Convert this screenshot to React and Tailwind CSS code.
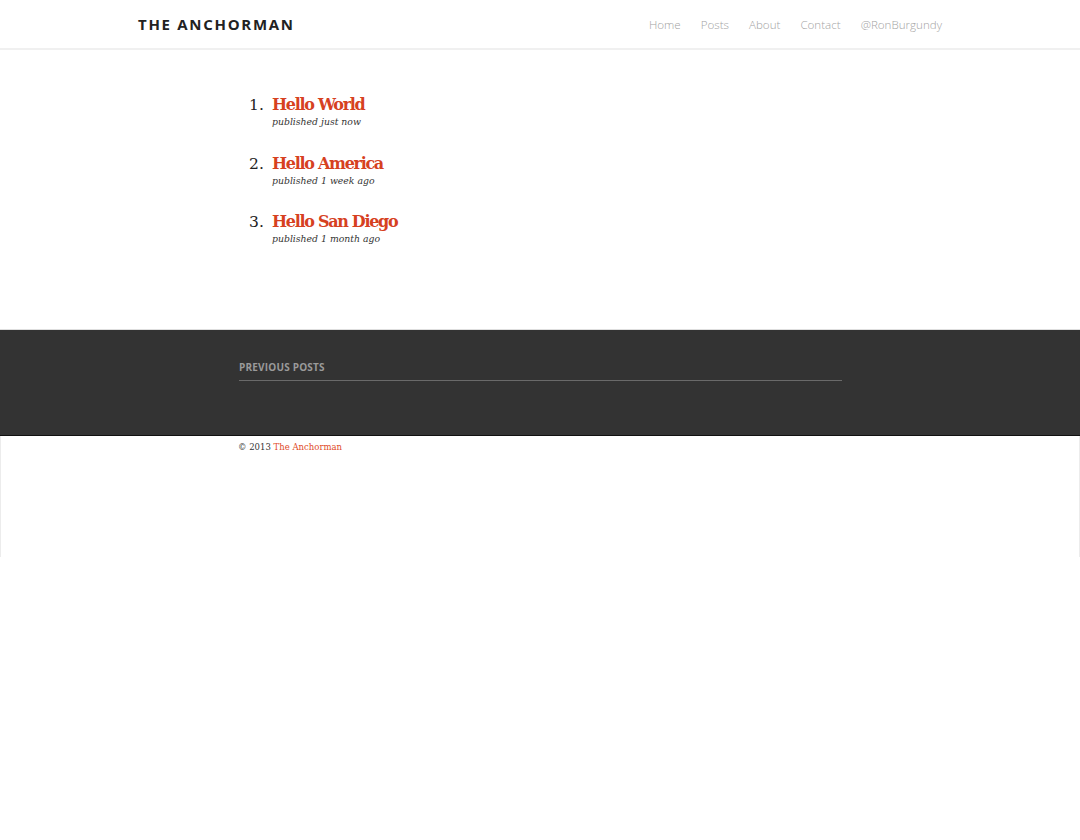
const posts = [
  { title: 'Hello World', when: 'just now' },
  { title: 'Hello America', when: '1 week ago' },
  { title: 'Hello San Diego', when: '1 month ago' },
];

export default function App() {
  return (
    <div className="min-h-[840px] bg-white">
      {/* Top bar */}
      <header className="h-[50px] border-b-2 border-[#f0f0f0] bg-white">
        <div className="mx-auto flex h-full w-[804px] items-center justify-between pt-[1px]">
          <a className="font-['Open_Sans',sans-serif] text-[15px] font-bold tracking-[1.7px] text-[#222]">
            THE ANCHORMAN
          </a>
          <nav className="flex gap-[20px] font-['Open_Sans',sans-serif] text-[11.6px] font-light text-[#a3a3a3]">
            <a>Home</a>
            <a>Posts</a>
            <a>About</a>
            <a>Contact</a>
            <a>@RonBurgundy</a>
          </nav>
        </div>
      </header>

      {/* Post list */}
      <main className="h-[279px] pt-[45px]">
        <ol className="mx-auto flex w-[602px] flex-col gap-[24.5px] font-['DejaVu_Serif',serif]">
          {posts.map((post, i) => (
            <li key={post.title} className="flex">
              <span className="w-[33px] pl-[10px] text-[15.5px] leading-[20px] text-[#222]">{i + 1}.</span>
              <div>
                <h2 className="text-[16px] font-bold leading-[20px] tracking-[-1.3px] text-[#d6411f]">{post.title}</h2>
                <p className="text-[9.3px] italic leading-[14px] text-[#333]">published {post.when}</p>
              </div>
            </li>
          ))}
        </ol>
      </main>

      {/* Dark footer band */}
      <section className="h-[107px] border-t border-[#dedede] border-b border-b-[#111] bg-[#333]">
        <div className="mx-auto w-[604px] pt-[30px] pl-[1px]">
          <h3 className="border-b border-[#6a6a6a] pb-[5px] font-['Open_Sans',sans-serif] text-[10px] font-bold tracking-[0.2px] text-[#9a9a9a]">
            PREVIOUS POSTS
          </h3>
        </div>
      </section>

      {/* Bottom */}
      <footer className="h-[121px] border-x border-[#ececec]">
        <p className="mx-auto w-[604px] pt-[5px] font-['DejaVu_Serif',serif] text-[8.5px] text-[#333]">
          © 2013 <a className="text-[#e04a28]">The Anchorman</a>
        </p>
      </footer>
    </div>
  );
}
